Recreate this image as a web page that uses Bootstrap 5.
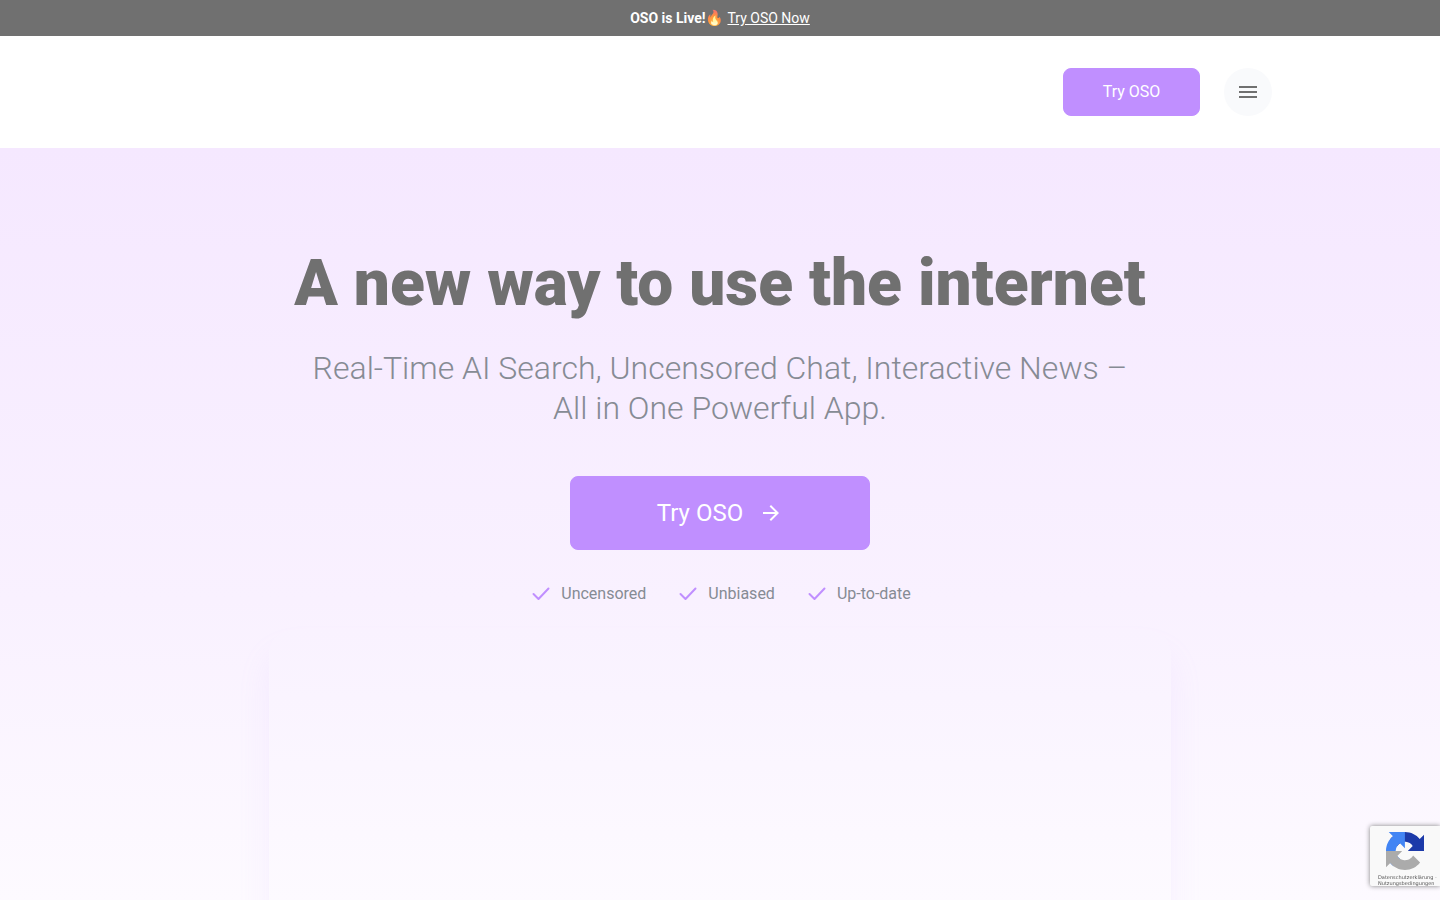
<!DOCTYPE html>
<html lang="en">
<head>
<meta charset="utf-8">
<meta name="viewport" content="width=device-width, initial-scale=1">
<title>OSO</title>
<link href="https://cdn.jsdelivr.net/npm/bootstrap@5.3.0/dist/css/bootstrap.min.css" rel="stylesheet">
<style>
body { font-family: Roboto, "Liberation Sans", "Noto Color Emoji", sans-serif; color: #707070; line-height: 24px; }
.announce { background: #707070; font-size: 14px; line-height: 20px; }
.flame { display: inline-block; font-size: 15px; filter: contrast(.6) brightness(1.25); }
.page-width { max-width: 1136px; padding-inline: 16px; }
.btn-oso { --bs-btn-color: #fff; --bs-btn-bg: #c08fff; --bs-btn-border-color: #c08fff; --bs-btn-hover-color: #fff; --bs-btn-hover-bg: #b27bfa; --bs-btn-hover-border-color: #b27bfa; --bs-btn-border-radius: 8px; }
.btn-top { width: 137px; height: 48px; }
.btn-menu { width: 48px; height: 48px; background: #f9fafc; color: #707070; }
.hero { background: linear-gradient(#f5e8ff, #f9f1ff 60%, #fdfaff); padding-top: 96px; }
.hero h1 { font-size: 64px; line-height: 80px; font-weight: 900; }
.tagline { max-width: 852px; font-size: 32px; line-height: 40px; font-weight: 300; color: #868b94; }
.btn-hero { width: 300px; height: 74px; font-size: 24px; }
.perks { gap: 30px; color: #868b94; }
.perks svg { fill: none; stroke: #c08fff; stroke-width: 2; stroke-linecap: round; stroke-linejoin: round; }
.preview { width: 902px; max-width: 92%; min-height: 300px; margin-bottom: -64px; border-radius: 24px; background: linear-gradient(#f9f2ff, #fdfaff 81%); box-shadow: 0 24px 32px rgba(200, 165, 255, .12); }
.captcha { right: 0; bottom: 14px; width: 70px; height: 60px; background: #f9f9f9; border-radius: 2px 0 0 2px; box-shadow: 0 0 5px gray; font-family: "DejaVu Sans", sans-serif; font-size: 5px; line-height: 6px; padding: 6px 0 0 8px; }
.captcha svg { margin: 0 0 4px 8px; }
.captcha a { color: #555; text-decoration: none; }
</style>
</head>
<body>
<div class="d-flex flex-column vh-100 overflow-hidden">
  <div class="announce text-white text-center p-2"><strong>OSO is Live!</strong><span class="flame">🔥</span> <a class="text-white" href="#try">Try OSO Now</a></div>
  <header class="bg-white">
    <div class="page-width container-fluid d-flex justify-content-end align-items-center gap-4 py-4">
      <button type="button" class="btn btn-oso btn-top my-2">Try OSO</button>
      <button type="button" class="btn btn-menu border-0 rounded-circle p-0 d-flex align-items-center justify-content-center" aria-label="Menu">
        <svg width="24" height="24" fill="currentColor" aria-hidden="true"><path d="M3 18h18v-2H3zm0-5h18v-2H3zm0-7v2h18V6z"/></svg>
      </button>
    </div>
  </header>
  <main class="hero flex-grow-1 d-flex flex-column align-items-center text-center overflow-hidden">
    <h1 class="mb-4">A new way to use the internet</h1>
    <p class="tagline mb-5">Real-Time AI Search, Uncensored Chat, Interactive News – All in One Powerful App.</p>
    <button type="button" id="try" class="btn btn-oso btn-hero flex-shrink-0 d-flex align-items-center justify-content-center gap-3">Try OSO
      <svg width="24" height="24" fill="currentColor" aria-hidden="true"><path d="M12 4l-1.41 1.41L16.17 11H4v2h12.17l-5.58 5.59L12 20l8-8z"/></svg>
    </button>
    <ul class="perks list-unstyled d-flex flex-wrap justify-content-center mt-4 mb-4 pt-2">
      <li class="d-flex gap-2"><svg width="24" height="24" aria-hidden="true"><path d="M4.5 12l5 5L19.500 6.500"/></svg>Uncensored</li>
      <li class="d-flex gap-2"><svg width="24" height="24" aria-hidden="true"><path d="M4.500 12l5 5L19.500 6.500"/></svg>Unbiased</li>
      <li class="d-flex gap-2"><svg width="24" height="24" aria-hidden="true"><path d="M4.500 12l5 5L19.500 6.500"/></svg>Up-to-date</li>
    </ul>
    <div class="preview flex-shrink-0 flex-grow-1"></div>
  </main>
</div>
<aside class="captcha position-fixed">
  <svg class="d-block" width="38" height="38" viewBox="0 0 64 64" aria-hidden="true">
    <path fill="#1c3aa9" d="M64 31.955l-.033-1.37V4.687l-7.16 7.16C50.948 4.674 42.033.093 32.05.093c-10.4 0-19.622 4.96-25.458 12.64l11.736 11.86a15.55 15.55 0 0 1 4.754-5.334c2.05-1.6 4.952-2.906 8.968-2.906.485 0 .86.057 1.135.163 4.976.393 9.288 3.14 11.828 7.124l-8.307 8.307L64 31.953"/>
    <path fill="#4285f4" d="M31.862.094l-1.37.033H4.594l7.16 7.16C4.58 13.147 0 22.06 0 32.046c0 10.4 4.96 19.622 12.64 25.458L24.5 45.768a15.55 15.55 0 0 1-5.334-4.754c-1.6-2.05-2.906-4.952-2.906-8.968 0-.485.057-.86.163-1.135.393-4.976 3.14-9.288 7.124-11.828l8.307 8.307L31.86.095"/>
    <path fill="#ababab" d="M.001 32.045l.033 1.37v25.898l7.16-7.16c5.86 7.173 14.774 11.754 24.76 11.754 10.4 0 19.622-4.96 25.458-12.64l-11.736-11.86a15.55 15.55 0 0 1-4.754 5.334c-2.05 1.6-4.952 2.906-8.968 2.906-.485 0-.86-.057-1.135-.163-4.976-.393-9.288-3.14-11.828-7.124l8.307-8.307c-10.522.04-22.4.066-27.295-.005"/>
  </svg>
  <div lang="de" class="text-nowrap"><a href="#privacy">Datenschutzerklärung</a> -<br><a href="#terms">Nutzungsbedingungen</a></div>
</aside>
<script src="https://cdn.jsdelivr.net/npm/bootstrap@5.3.0/dist/js/bootstrap.bundle.min.js"></script>
</body>
</html>
